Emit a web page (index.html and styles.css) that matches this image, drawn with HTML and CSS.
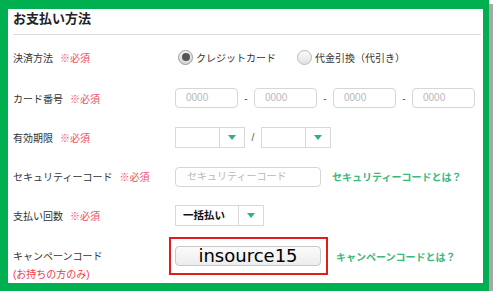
FILE: index.html
```html
<!DOCTYPE html>
<html lang="ja">
<head>
<meta charset="utf-8">
<title>お支払い方法</title>
<link rel="stylesheet" href="styles.css">
</head>
<body>
<div class="frame">
  <div class="panel">
    <h2 class="title">お支払い方法</h2>

    <div class="row r1">
      <div class="label">決済方法<span class="req">※必須</span></div>
      <div class="ctrl">
        <label class="radio first"><span class="dot checked"></span>クレジットカード</label>
        <label class="radio"><span class="dot"></span>代金引換（代引き）</label>
      </div>
    </div>

    <div class="row r2">
      <div class="label">カード番号<span class="req">※必須</span></div>
      <div class="ctrl">
        <span class="input card ph">0000</span>
        <span class="sep">-</span>
        <span class="input card ph">0000</span>
        <span class="sep">-</span>
        <span class="input card ph">0000</span>
        <span class="sep">-</span>
        <span class="input card ph">0000</span>
      </div>
    </div>

    <div class="row r3">
      <div class="label">有効期限<span class="req">※必須</span></div>
      <div class="ctrl">
        <div class="select short"><span class="sel-val"></span><span class="sel-btn"><span class="arrow"></span></span></div>
        <span class="sep">/</span>
        <div class="select short"><span class="sel-val"></span><span class="sel-btn"><span class="arrow"></span></span></div>
      </div>
    </div>

    <div class="row r4">
      <div class="label">セキュリティーコード<span class="req">※必須</span></div>
      <div class="ctrl">
        <span class="input wide ph">セキュリティーコード</span>
        <a class="link sec-link">セキュリティーコードとは？</a>
      </div>
    </div>

    <div class="row r5">
      <div class="label">支払い回数<span class="req">※必須</span></div>
      <div class="ctrl">
        <div class="select pay"><span class="sel-val">一括払い</span><span class="sel-btn"><span class="arrow"></span></span></div>
      </div>
    </div>

    <div class="row r6">
      <div class="label stack">
        <span>キャンペーンコード</span>
        <span class="note">(お持ちの方のみ)</span>
      </div>
      <div class="ctrl top">
        <div class="redbox"><span class="input campaign">insource15</span></div>
        <a class="link camp-link">キャンペーンコードとは？</a>
      </div>
    </div>
  </div>
</div>
</body>
</html>
```

FILE: styles.css
```css
html, body {
  margin: 0;
  padding: 0;
  background: #fff;
}

body {
  font-family: "Liberation Sans", "Noto Sans CJK JP", sans-serif;
  color: #333;
  font-size: 10px;
}

.frame {
  width: 489px;
  height: 291px;
  box-sizing: border-box;
  border-style: solid;
  border-color: #00b050;
  border-width: 9px 6px 8px 8px;
  box-shadow: 4px 4px 0 #a8a8a8;
  background: #fff;
}

.panel {
  padding: 0 2px 0 5px;
}

.title {
  margin: 0;
  height: 25px;
  line-height: 20px;
  font-size: 13px;
  font-weight: bold;
  color: #222;
  border-bottom: 1px solid #dcdcdc;
}

.row {
  display: flex;
  align-items: center;
}

.r1 { height: 42px; margin-top: 1px; }
.r2 { height: 40px; }
.r3 { height: 38px; }
.r4 { height: 41px; }
.r5 { height: 37px; }
.r6 { height: 38px; margin-top: 3px; align-items: flex-start; }

.label {
  width: 162px;
  flex: none;
  white-space: nowrap;
  color: #333;
  font-size: 10px;
}

.req {
  margin-left: 7px;
  color: #ee4d6a;
}

.label.stack {
  display: flex;
  flex-direction: column;
  padding-top: 11px;
  line-height: 18px;
}

.note {
  color: #f23a3a;
}

.ctrl {
  display: flex;
  align-items: center;
}

.ctrl.top {
  height: 38px;
}

/* radios */
.radio {
  display: flex;
  align-items: center;
  font-size: 10px;
  color: #333;
  white-space: nowrap;
}

.radio.first {
  width: 119px;
  margin-left: 3px;
}

.dot {
  width: 15px;
  height: 15px;
  box-sizing: border-box;
  border-radius: 50%;
  border: 1px solid #b9b9b9;
  background: linear-gradient(#fbfbfb, #e2e2e2);
  margin-right: 3px;
  display: flex;
  align-items: center;
  justify-content: center;
}

.dot.checked {
  border-color: #9a9a9a;
  background: linear-gradient(#f2f2f2, #d6d6d6);
}

.dot.checked::after {
  content: "";
  width: 8px;
  height: 8px;
  border-radius: 50%;
  background: #555;
}

/* inputs */
.input {
  display: block;
  box-sizing: border-box;
  height: 20px;
  line-height: 18px;
  border: 1px solid #d6d6d6;
  border-radius: 4px;
  background: #fff;
  font-size: 10px;
}

.ph {
  color: #b8b8b8;
}

.card {
  width: 63px;
  padding-left: 10px;
}

.sep {
  width: 16px;
  text-align: center;
  color: #555;
  font-size: 10px;
}

.wide {
  width: 146px;
  padding-left: 11px;
}

/* selects */
.select {
  display: flex;
  box-sizing: border-box;
  height: 21px;
  border: 1px solid #d9d9d9;
  background: #fff;
}

.select.short {
  width: 70px;
}

.select.pay {
  width: 89px;
}

.sel-val {
  flex: 1;
  padding-left: 7px;
  line-height: 19px;
  font-size: 10.5px;
  font-weight: bold;
  color: #111;
}

.sel-btn {
  width: 25px;
  box-sizing: border-box;
  border-left: 1px solid #d9d9d9;
  display: flex;
  align-items: center;
  justify-content: center;
}

.arrow {
  width: 0;
  height: 0;
  border-left: 4px solid transparent;
  border-right: 4px solid transparent;
  border-top: 5px solid #2bb673;
}

/* links */
.link {
  color: #3bb87c;
  font-weight: bold;
  font-size: 10px;
  white-space: nowrap;
}

.sec-link {
  margin-left: 11px;
}

.camp-link {
  margin-left: 8px;
}

/* campaign */
.redbox {
  margin-left: -6px;
  box-sizing: border-box;
  height: 38px;
  width: 159px;
  border: 2px solid #e31b1b;
  padding: 7px 5px 7px 4px;
}

.campaign {
  width: 146px;
  border-color: #c8c8c8;
  background: linear-gradient(#fbfbfb, #ededed);
  font-family: "DejaVu Sans", sans-serif;
  font-size: 18px;
  color: #000;
  text-align: center;
  line-height: 18px;
}
```
